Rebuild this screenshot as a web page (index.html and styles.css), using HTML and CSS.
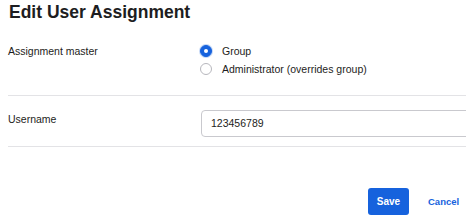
FILE: index.html
```html
<!DOCTYPE html>
<html>
<head>
<meta charset="utf-8">
<link rel="stylesheet" href="styles.css">
</head>
<body>
<div class="dialog">
  <h1 class="title">Edit User Assignment</h1>
  <div class="row row-master">
    <div class="label">Assignment master</div>
    <div class="options">
      <label class="option"><span class="radio checked"></span><span>Group</span></label>
      <label class="option"><span class="radio"></span><span>Administrator (overrides group)</span></label>
    </div>
  </div>
  <div class="divider"></div>
  <div class="row row-user">
    <div class="label">Username</div>
    <div class="field"><div class="input">123456789</div></div>
  </div>
  <div class="divider"></div>
  <div class="actions">
    <button class="btn-save">Save</button>
    <button class="btn-cancel">Cancel</button>
  </div>
</div>
</body>
</html>
```
FILE: styles.css
```css
html, body {
  margin: 0;
  padding: 0;
  overflow: hidden;
  background: #ffffff;
}
body {
  font-family: "Liberation Sans", Arial, sans-serif;
  color: #1d1d21;
  width: 466px;
  height: 217px;
}
.dialog {
  padding-left: 8px;
}
.title {
  margin: 0;
  padding: 1px 0 0 1px;
  font-size: 17.5px;
  font-weight: bold;
  line-height: 22px;
  color: #1d1d21;
}
.row {
  display: flex;
}
.row-master {
  padding-top: 19px;
  padding-bottom: 17px;
}
.row-user {
  padding-top: 14px;
  padding-bottom: 9px;
}
.label {
  width: 192px;
  flex: none;
  font-size: 10.5px;
  line-height: 18px;
}
.options {
  display: flex;
  flex-direction: column;
}
.option {
  display: flex;
  align-items: center;
  height: 18px;
  font-size: 10.5px;
  gap: 10px;
}
.radio {
  width: 10px;
  height: 10px;
  border: 1px solid #b7b7bd;
  border-radius: 50%;
  box-sizing: content-box;
  background: #fff;
  position: relative;
  flex: none;
}
.radio.checked {
  border-color: #1662dd;
  background: #1662dd;
  box-shadow: 0 0 0 1px rgba(22, 98, 221, 0.25);
}
.radio.checked::after {
  content: "";
  position: absolute;
  left: 3px;
  top: 3px;
  width: 4px;
  height: 4px;
  border-radius: 50%;
  background: #fff;
}
.divider {
  height: 1px;
  background: #e3e3e6;
}
.field {
  flex: 1;
  min-width: 0;
  overflow: hidden;
}
.input {
  margin-left: 1px;
  width: 300px;
  height: 25px;
  border: 1px solid #c9c9ce;
  border-radius: 4px;
  padding-left: 9px;
  font-size: 10.5px;
  line-height: 25px;
  color: #1d1d21;
}
.actions {
  display: flex;
  justify-content: flex-end;
  align-items: center;
  gap: 19px;
  padding-right: 9px;
  margin-top: 41px;
}
.btn-save {
  width: 41px;
  height: 27px;
  border: none;
  border-radius: 3px;
  background: #1662dd;
  color: #ffffff;
  font-family: "Liberation Sans", Arial, sans-serif;
  font-size: 10px;
  font-weight: bold;
  padding: 0;
}
.btn-cancel {
  width: 29px;
  border: none;
  background: none;
  padding: 0;
  text-align: left;
  white-space: nowrap;
  color: #1662dd;
  font-family: "Liberation Sans", Arial, sans-serif;
  font-size: 9.5px;
  font-weight: bold;
}
```
